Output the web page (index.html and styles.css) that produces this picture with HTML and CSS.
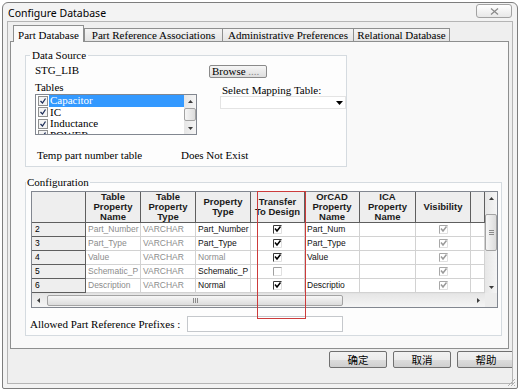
FILE: index.html
```html
<!DOCTYPE html>
<html lang="en">

<head>
    <meta charset="UTF-8">
    <meta name="viewport" content="width=device-width, initial-scale=1.0">
    <title>Configure Database</title>
    <link rel="stylesheet" href="styles.css">
</head>

<body>
    <div class="window">
        <!-- Title bar -->
        <div class="titlebar">
            <span class="title">Configure Database</span>
            <button type="button" class="close_btn">
                <svg width="9" height="7" viewBox="0 0 9 7"><path d="M1 0.5L8 6.5M8 0.5L1 6.5" stroke="#8a8a8a" stroke-width="1.2" fill="none"/></svg>
            </button>
        </div>

        <div class="client">
            <!-- Tabs -->
            <div class="tabs">
                <div class="tab tab_active tab_part">Part Database</div>
                <div class="tab tab_ref">Part Reference Associations</div>
                <div class="tab tab_admin">Administrative Preferences</div>
                <div class="tab tab_rel">Relational Database</div>
            </div>

            <div class="panel">
                <!-- Data Source -->
                <fieldset class="group group_source">
                    <legend>Data Source</legend>
                    <div class="source_body">
                        <div class="source_top">
                            <div class="source_left">
                                <div class="line">STG_LIB</div>
                                <div class="line tables_label">Tables</div>
                                <div class="listbox">
                                    <div class="list_items">
                                        <div class="list_item"><svg class="list_check" width="10" height="10" viewBox="0 0 10 10"><rect x="0.5" y="0.5" width="9" height="9" fill="#f4f4f4" stroke="#8e8f8f"/><path d="M2.5 5l2 2 3-4.5" stroke="#1f2f5a" stroke-width="1.3" fill="none"/></svg><span class="item_text item_selected">Capacitor</span></div>
                                        <div class="list_item"><svg class="list_check" width="10" height="10" viewBox="0 0 10 10"><rect x="0.5" y="0.5" width="9" height="9" fill="#f4f4f4" stroke="#8e8f8f"/><path d="M2.5 5l2 2 3-4.5" stroke="#1f2f5a" stroke-width="1.3" fill="none"/></svg><span class="item_text">IC</span></div>
                                        <div class="list_item"><svg class="list_check" width="10" height="10" viewBox="0 0 10 10"><rect x="0.5" y="0.5" width="9" height="9" fill="#f4f4f4" stroke="#8e8f8f"/><path d="M2.5 5l2 2 3-4.5" stroke="#1f2f5a" stroke-width="1.3" fill="none"/></svg><span class="item_text">Inductance</span></div>
                                        <div class="list_item"><svg class="list_check" width="10" height="10" viewBox="0 0 10 10"><rect x="0.5" y="0.5" width="9" height="9" fill="#f4f4f4" stroke="#8e8f8f"/><path d="M2.5 5l2 2 3-4.5" stroke="#1f2f5a" stroke-width="1.3" fill="none"/></svg><span class="item_text">POWER</span></div>
                                    </div>
                                    <div class="vscroll list_scroll">
                                        <div class="scroll_btn"><svg width="5" height="3" viewBox="0 0 5 3"><path d="M0 3L2.5 0L5 3Z" fill="#3c3c3c"/></svg></div>
                                        <div class="scroll_track"><div class="scroll_thumb list_thumb"></div></div>
                                        <div class="scroll_btn"><svg width="5" height="3" viewBox="0 0 5 3"><path d="M0 0L2.5 3L5 0Z" fill="#3c3c3c"/></svg></div>
                                    </div>
                                </div>
                            </div>
                            <div class="source_right">
                                <button type="button" class="browse_btn">Browse <span class="dots">....</span></button>
                                <div class="line mapping_label">Select Mapping Table:</div>
                                <div class="combo">
                                    <svg width="7" height="4" viewBox="0 0 7 4"><path d="M0 0H7L3.5 4Z" fill="#000"/></svg>
                                </div>
                            </div>
                        </div>
                        <div class="line temp_row"><span class="temp_name">Temp part number table</span>Does Not Exist</div>
                    </div>
                </fieldset>

                <!-- Configuration -->
                <fieldset class="group group_config">
                    <legend>Configuration</legend>
                    <div class="config_body">
                        <div class="grid">
                            <div class="cells">
                                <div class="hcell"></div>
                                <div class="hcell">Table<br>Property<br>Name</div>
                                <div class="hcell">Table<br>Property<br>Type</div>
                                <div class="hcell">Property<br>Type</div>
                                <div class="hcell">Transfer<br>To Design</div>
                                <div class="hcell">OrCAD<br>Property<br>Name</div>
                                <div class="hcell">ICA<br>Property<br>Name</div>
                                <div class="hcell">Visibility</div>
                                <div class="hcell"></div>

                                <div class="rcell">2</div>
                                <div class="dcell ro">Part_Number</div>
                                <div class="dcell ro">VARCHAR</div>
                                <div class="dcell">Part_Number</div>
                                <div class="dcell ccell"><svg class="cb on" width="9" height="9" viewBox="0 0 9 9"><path class="cb_dark" d="M0.5 9V0.5H9"/><path class="cb_light" d="M8.5 0.5V8.5H0.5"/><path class="cb_mark" d="M2 3.5l2 2.5 3.5-4.5"/></svg></div>
                                <div class="dcell narrow">Part_Number</div>
                                <div class="dcell"></div>
                                <div class="dcell ccell"><svg class="cb dis" width="9" height="9" viewBox="0 0 9 9"><path class="cb_dark" d="M0.5 9V0.5H9"/><path class="cb_light" d="M8.5 0.5V8.5H0.5"/><path class="cb_mark" d="M2 3.5l2 2.5 3.5-4.5"/></svg></div>
                                <div class="dcell"></div>

                                <div class="rcell">3</div>
                                <div class="dcell ro">Part_Type</div>
                                <div class="dcell ro">VARCHAR</div>
                                <div class="dcell">Part_Type</div>
                                <div class="dcell ccell"><svg class="cb on" width="9" height="9" viewBox="0 0 9 9"><path class="cb_dark" d="M0.5 9V0.5H9"/><path class="cb_light" d="M8.5 0.5V8.5H0.5"/><path class="cb_mark" d="M2 3.5l2 2.5 3.5-4.5"/></svg></div>
                                <div class="dcell narrow">Part_Type</div>
                                <div class="dcell"></div>
                                <div class="dcell ccell"><svg class="cb dis" width="9" height="9" viewBox="0 0 9 9"><path class="cb_dark" d="M0.5 9V0.5H9"/><path class="cb_light" d="M8.5 0.5V8.5H0.5"/><path class="cb_mark" d="M2 3.5l2 2.5 3.5-4.5"/></svg></div>
                                <div class="dcell"></div>

                                <div class="rcell">4</div>
                                <div class="dcell ro">Value</div>
                                <div class="dcell ro">VARCHAR</div>
                                <div class="dcell ro">Normal</div>
                                <div class="dcell ccell"><svg class="cb on" width="9" height="9" viewBox="0 0 9 9"><path class="cb_dark" d="M0.5 9V0.5H9"/><path class="cb_light" d="M8.5 0.5V8.5H0.5"/><path class="cb_mark" d="M2 3.5l2 2.5 3.5-4.5"/></svg></div>
                                <div class="dcell narrow">Value</div>
                                <div class="dcell"></div>
                                <div class="dcell ccell"><svg class="cb dis" width="9" height="9" viewBox="0 0 9 9"><path class="cb_dark" d="M0.5 9V0.5H9"/><path class="cb_light" d="M8.5 0.5V8.5H0.5"/><path class="cb_mark" d="M2 3.5l2 2.5 3.5-4.5"/></svg></div>
                                <div class="dcell"></div>

                                <div class="rcell">5</div>
                                <div class="dcell ro">Schematic_Part</div>
                                <div class="dcell ro">VARCHAR</div>
                                <div class="dcell">Schematic_Part</div>
                                <div class="dcell ccell"><svg class="cb off" width="9" height="9" viewBox="0 0 9 9"><path class="cb_dark" d="M0.5 9V0.5H9"/><path class="cb_light" d="M8.5 0.5V8.5H0.5"/></svg></div>
                                <div class="dcell narrow"></div>
                                <div class="dcell"></div>
                                <div class="dcell ccell"><svg class="cb dis" width="9" height="9" viewBox="0 0 9 9"><path class="cb_dark" d="M0.5 9V0.5H9"/><path class="cb_light" d="M8.5 0.5V8.5H0.5"/><path class="cb_mark" d="M2 3.5l2 2.5 3.5-4.5"/></svg></div>
                                <div class="dcell"></div>

                                <div class="rcell">6</div>
                                <div class="dcell ro">Description</div>
                                <div class="dcell ro">VARCHAR</div>
                                <div class="dcell">Normal</div>
                                <div class="dcell ccell"><svg class="cb on" width="9" height="9" viewBox="0 0 9 9"><path class="cb_dark" d="M0.5 9V0.5H9"/><path class="cb_light" d="M8.5 0.5V8.5H0.5"/><path class="cb_mark" d="M2 3.5l2 2.5 3.5-4.5"/></svg></div>
                                <div class="dcell narrow">Description</div>
                                <div class="dcell"></div>
                                <div class="dcell ccell"><svg class="cb dis" width="9" height="9" viewBox="0 0 9 9"><path class="cb_dark" d="M0.5 9V0.5H9"/><path class="cb_light" d="M8.5 0.5V8.5H0.5"/><path class="cb_mark" d="M2 3.5l2 2.5 3.5-4.5"/></svg></div>
                                <div class="dcell"></div>
                            </div>

                            <div class="vscroll grid_vscroll">
                                <div class="scroll_btn"><svg width="5" height="3" viewBox="0 0 5 3"><path d="M0 3L2.5 0L5 3Z" fill="#3c3c3c"/></svg></div>
                                <div class="scroll_track">
                                    <div class="scroll_thumb grid_vthumb">
                                        <svg width="5" height="5" viewBox="0 0 5 5"><path d="M0 0.5H5M0 2.5H5M0 4.5H5" stroke="#8a8a8a"/></svg>
                                    </div>
                                </div>
                                <div class="scroll_btn"><svg width="5" height="3" viewBox="0 0 5 3"><path d="M0 0L2.5 3L5 0Z" fill="#3c3c3c"/></svg></div>
                            </div>

                            <div class="hscroll">
                                <div class="scroll_btn hbtn"><svg width="3" height="5" viewBox="0 0 3 5"><path d="M3 0L0 2.5L3 5Z" fill="#3c3c3c"/></svg></div>
                                <div class="scroll_track htrack">
                                    <div class="scroll_thumb grid_hthumb">
                                        <svg width="5" height="5" viewBox="0 0 5 5"><path d="M0.5 0V5M2.5 0V5M4.5 0V5" stroke="#8a8a8a"/></svg>
                                    </div>
                                </div>
                                <div class="scroll_btn hbtn"><svg width="3" height="5" viewBox="0 0 3 5"><path d="M0 0L3 2.5L0 5Z" fill="#3c3c3c"/></svg></div>
                            </div>
                            <div class="scroll_corner"></div>
                        </div>

                        <div class="prefix_row">
                            <label for="prefixes" class="prefix_label">Allowed Part Reference Prefixes :</label>
                            <input type="text" id="prefixes" class="prefix_input">
                        </div>
                    </div>
                </fieldset>

                <!-- highlight drawn over the Transfer column -->
                <div class="mark_box"></div>
            </div>

            <div class="dialog_buttons">
                <button type="button" class="dlg_btn">确定</button>
                <button type="button" class="dlg_btn">取消</button>
                <button type="button" class="dlg_btn">帮助</button>
            </div>
        </div>

        <svg class="size_grip" width="9" height="9" viewBox="0 0 9 9"><path d="M8 1L1 8M8 4L4 8M8 7L7 8" stroke="#b0b0b0" fill="none"/></svg>
    </div>
</body>

</html>
```

FILE: styles.css
```css
body {
    margin: 0;
    background-color: #ffffff;
    font-family: "Liberation Serif", serif;
    font-size: 11px;
    color: #000000;
}

.window {
    position: relative;
    width: 516px;
    height: 387px;
    margin: 2px 0 0 2px;
    box-sizing: border-box;
    border: 1px solid #7d7d7d;
    border-radius: 6px 6px 2px 2px;
    background-color: #f3f3f3;
    padding: 0 4px 4px 4px;
    display: flex;
    flex-direction: column;
}

/* Title bar */
.titlebar {
    height: 18px;
    display: flex;
    justify-content: space-between;
    align-items: flex-start;
}

.title {
    font-family: "Noto Sans", sans-serif;
    font-size: 10.5px;
    line-height: 18px;
    margin-left: 1px;
    padding-top: 1px;
}

.close_btn {
    width: 36px;
    height: 14px;
    margin: 1px 1px 0 0;
    padding: 0;
    border: 1px solid #a2a2a2;
    border-radius: 3px;
    background: linear-gradient(#ffffff, #e8e8e8);
    display: flex;
    justify-content: center;
    align-items: center;
}

.client {
    flex: 1;
    border: 1px solid #b5b5b5;
    background-color: #efefef;
    padding: 3px 3px 0 2px;
    overflow: hidden;
}

/* Tabs */
.tabs {
    height: 16px;
    display: flex;
    align-items: flex-end;
}

.tab {
    height: 13px;
    box-sizing: border-box;
    border: 1px solid #8e8f8f;
    border-bottom: none;
    background: linear-gradient(#f4f4f4, #e4e4e4);
    text-align: center;
    line-height: 12px;
    white-space: nowrap;
}

.tab_active {
    position: relative;
    z-index: 1;
    height: 17px;
    margin-bottom: -1px;
    padding-top: 3px;
    background: #f9f9f9;
}

.tab_part {
    width: 71px;
    margin-left: 3px;
}

.tab_ref {
    width: 139px;
}

.tab_admin {
    width: 132px;
    margin-left: -1px;
}

.tab_rel {
    width: 97px;
    margin-left: -1px;
}

.panel {
    position: relative;
    height: 308px;
    box-sizing: border-box;
    border: 1px solid #8e8f8f;
    background-color: #f9f9f9;
}

/* Group boxes */
.group {
    margin: 0 0 0 14px;
    padding: 0;
    border: 1px solid #d5dbe0;
    box-sizing: border-box;
    background-color: #fdfdfd;
}

.group legend {
    line-height: 12px;
    padding: 0 2px;
}

.group_source {
    width: 322px;
    margin-top: 7px;
}

.group_source legend {
    margin-left: 4px;
}

.group_config {
    width: 477px;
    margin-top: 9px;
}

.group_config legend {
    padding: 0 1px;
}

.line {
    height: 12px;
    line-height: 12px;
    white-space: nowrap;
}

.source_body {
    padding: 3px 0 5px 9px;
}

.source_top {
    display: flex;
}

.source_left {
    width: 162px;
}

.tables_label {
    margin-top: 5px;
}

.listbox {
    height: 41px;
    margin-top: 1px;
    box-sizing: border-box;
    border: 1px solid #828790;
    background-color: #ffffff;
    display: flex;
    overflow: hidden;
}

.list_items {
    flex: 1;
}

.list_item {
    height: 11.5px;
    display: flex;
    align-items: center;
}

.list_check {
    margin: 0 1px 0 2px;
}

.item_text {
    flex: 1;
    line-height: 11.5px;
    padding-left: 1px;
}

.item_selected {
    background-color: #3399ff;
    color: #ffffff;
}

.source_right {
    flex: 1;
    margin-left: 12px;
}

.browse_btn {
    width: 58px;
    height: 13px;
    margin-top: 1px;
    padding: 0 0 0 2px;
    border: 1px solid #8a8a8a;
    border-radius: 2px;
    background: linear-gradient(#f6f6f6, #dddddd);
    font-family: "Liberation Serif", serif;
    font-size: 11px;
    line-height: 11px;
    text-align: left;
    white-space: nowrap;
    color: #000000;
}

.dots {
    color: #8c8c8c;
}

.mapping_label {
    margin: 6px 0 0 13px;
}

.combo {
    width: 126px;
    height: 13px;
    margin-left: 11px;
    box-sizing: border-box;
    border: 1px solid #e4e4e4;
    background-color: #ffffff;
    display: flex;
    justify-content: flex-end;
    align-items: center;
    padding-right: 2px;
}

.temp_row {
    margin: 14px 0 0 2px;
}

.temp_name {
    display: inline-block;
    width: 144px;
}

/* Scroll bars */
.vscroll {
    width: 12px;
    display: flex;
    flex-direction: column;
    background: linear-gradient(to right, #e6e6e6, #f5f5f5);
}

.scroll_btn {
    height: 12px;
    display: flex;
    justify-content: center;
    align-items: center;
}

.scroll_track {
    flex: 1;
}

.scroll_thumb {
    box-sizing: border-box;
    border: 1px solid #a3a3a3;
    border-radius: 2px;
    background: linear-gradient(to right, #f6f6f6, #dcdcdc);
    display: flex;
    justify-content: center;
    align-items: center;
}

.list_thumb {
    height: 13px;
    margin-top: 1px;
}

.grid_vthumb {
    height: 37px;
    margin-top: 10px;
}

.hscroll {
    display: flex;
    background: linear-gradient(#e6e6e6, #f5f5f5);
    border-top: 1px solid #e2e2e2;
}

.hbtn {
    width: 13px;
    height: auto;
}

.htrack {
    display: flex;
}

.grid_hthumb {
    width: 296px;
    margin: 1px 0 1px 2px;
    background: linear-gradient(#f6f6f6, #dcdcdc);
}

.scroll_corner {
    background-color: #ececec;
}

/* Configuration grid */
.config_body {
    padding: 3px 0 3px 5px;
}

.grid {
    width: 467px;
    height: 117px;
    box-sizing: border-box;
    border: 1px solid #828790;
    background-color: #ffffff;
    display: grid;
    grid-template-columns: 453px 12px;
    grid-template-rows: 101px 14px;
}

.cells {
    display: grid;
    grid-template-columns: 54px 55px 55px 55px 54px 55px 56px 55px 14px;
    grid-template-rows: 31px repeat(5, 14px);
    overflow: hidden;
    font-family: "Liberation Sans", sans-serif;
}

.hcell {
    box-sizing: border-box;
    border-right: 1px solid #5e5e5e;
    border-bottom: 1px solid #5e5e5e;
    background-color: #eeeeee;
    font-weight: bold;
    font-size: 9.5px;
    line-height: 10px;
    text-align: center;
    display: flex;
    justify-content: center;
    align-items: center;
    color: #1a1a1a;
}

.rcell {
    box-sizing: border-box;
    border-right: 1px solid #5e5e5e;
    border-bottom: 1px solid #5e5e5e;
    background-color: #eeeeee;
    font-size: 8.5px;
    line-height: 12px;
    padding-left: 3px;
}

.dcell {
    box-sizing: border-box;
    border-right: 1px solid #d2d2d2;
    border-bottom: 1px solid #d2d2d2;
    font-size: 8.5px;
    line-height: 11px;
    padding: 1px 0 0 2px;
    overflow: hidden;
    word-break: break-all;
    color: #111111;
}

.dcell.ro {
    color: #8c8c8c;
}

.dcell.narrow {
    padding-right: 11px;
}

.ccell {
    display: flex;
    justify-content: center;
    align-items: center;
    padding: 0;
}

.cb path {
    fill: none;
}

.cb .cb_dark {
    stroke: #3a3a3a;
}

.cb .cb_light {
    stroke: #e0e0e0;
}

.cb .cb_mark {
    stroke: #000000;
    stroke-width: 1.5;
}

.cb.off .cb_dark {
    stroke: #a0a0a0;
}

.cb.dis .cb_dark {
    stroke: #a8a8a8;
}

.cb.dis .cb_mark {
    stroke: #9a9a9a;
}

.prefix_row {
    display: flex;
    margin-top: 8px;
    height: 16px;
}

.prefix_label {
    width: 157px;
    margin-left: -1px;
    line-height: 16px;
    white-space: nowrap;
}

.prefix_input {
    width: 156px;
    height: 16px;
    margin: 0;
    padding: 0;
    box-sizing: border-box;
    border: 1px solid #c5c8cc;
    background-color: #ffffff;
}

/* Red marker over the Transfer column */
.mark_box {
    position: absolute;
    left: 246px;
    top: 149px;
    width: 49px;
    height: 128px;
    box-sizing: border-box;
    border: 1px solid #cc3b3b;
}

/* Bottom buttons */
.dialog_buttons {
    display: flex;
    justify-content: flex-end;
    gap: 6px;
    margin: 2px -6px 0 0;
}

.dlg_btn {
    width: 58px;
    height: 17px;
    padding: 0;
    border: 1px solid #707070;
    border-radius: 2px;
    background: linear-gradient(#f2f2f2, #ebebeb 50%, #dddddd 51%, #cfcfcf);
    font-family: "Noto Sans CJK SC", sans-serif;
    font-size: 10.5px;
    line-height: 15px;
    color: #000000;
}

.size_grip {
    position: absolute;
    right: 1px;
    bottom: 1px;
}
```
